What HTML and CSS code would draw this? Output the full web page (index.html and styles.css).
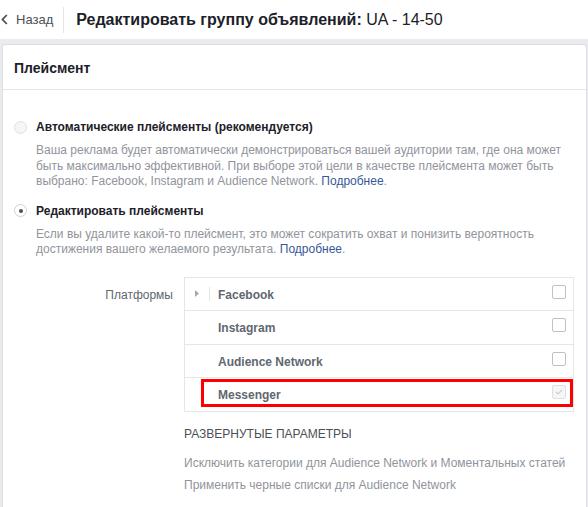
FILE: index.html
```html
<!DOCTYPE html>
<html lang="ru">
<head>
<meta charset="utf-8">
<title>Редактировать группу объявлений</title>
<link rel="stylesheet" href="styles.css">
</head>
<body>
<header class="topbar">
  <a class="back">
    <svg class="back-icon" width="7" height="11" viewBox="0 0 7 11"><path d="M5.8 1 1.5 5.5 5.8 10" fill="none" stroke="#4b4f56" stroke-width="1.8"/></svg>
    <span>Назад</span>
  </a>
  <div class="vsep"></div>
  <h1 class="title"><b>Редактировать группу объявлений:</b> UA - 14-50</h1>
</header>
<section class="card">
  <div class="card-head">Плейсмент</div>
  <div class="card-body">
    <div class="option">
      <span class="radio"></span>
      <span class="option-label">Автоматические плейсменты (рекомендуется)</span>
    </div>
    <p class="desc">Ваша реклама будет автоматически демонстрироваться вашей аудитории там, где она может быть максимально эффективной. При выборе этой цели в качестве плейсмента может быть выбрано: Facebook, Instagram и Audience Network. <a class="link">Подробнее</a>.</p>
    <div class="option">
      <span class="radio checked"></span>
      <span class="option-label">Редактировать плейсменты</span>
    </div>
    <p class="desc">Если вы удалите какой-то плейсмент, это может сократить охват и понизить вероятность достижения вашего желаемого результата. <a class="link">Подробнее</a>.</p>

    <div class="platforms">
      <div class="platforms-label">Платформы</div>
      <div class="platforms-main">
        <div class="ptable">
          <div class="prow">
            <span class="caret"><svg width="4" height="7" viewBox="0 0 4 7"><path d="M0 0 4 3.5 0 7z" fill="#a5a8ae"/></svg></span>
            <span class="caret-sep"></span>
            <span class="pname">Facebook</span>
            <span class="cbox"></span>
          </div>
          <div class="prow">
            <span class="pname">Instagram</span>
            <span class="cbox"></span>
          </div>
          <div class="prow">
            <span class="pname">Audience Network</span>
            <span class="cbox"></span>
          </div>
          <div class="prow">
            <span class="pname">Messenger</span>
            <span class="cbox disabled"><svg width="8" height="6" viewBox="0 0 8 6"><path d="M1 3 3 5 7 1" fill="none" stroke="#ccd0d5" stroke-width="1.2"/></svg></span>
            <span class="highlight"></span>
          </div>
        </div>
        <div class="adv-title">РАЗВЕРНУТЫЕ ПАРАМЕТРЫ</div>
        <div class="adv-link">Исключить категории для Audience Network и Моментальных статей</div>
        <div class="adv-link">Применить черные списки для Audience Network</div>
      </div>
    </div>
  </div>
</section>
</body>
</html>
```
FILE: styles.css
```css
* { box-sizing: border-box; }
html, body { margin: 0; padding: 0; }
body {
  background: #e9ebee;
  font-family: "Liberation Sans", Arial, sans-serif;
  font-size: 12px;
  color: #1d2129;
  height: 507px;
  overflow: hidden;
}
.topbar {
  height: 39px;
  background: #fff;
  display: flex;
  align-items: center;
}
.back {
  display: flex;
  align-items: center;
  color: #4b4f56;
  font-size: 13px;
  padding-left: 1px;
}
.back-icon { margin-right: 8px; }
.vsep {
  width: 1px;
  height: 26px;
  background: #e5e6e9;
  margin: 0 12px 0 10px;
}
.title {
  margin: 0;
  font-size: 16px;
  font-weight: normal;
  color: #1d2129;
  line-height: 20px;
  padding-top: 1px;
}
.title b { font-weight: bold; }
.card {
  margin: 5px 1px 0 2px;
  background: #fff;
  border: 1px solid #dddfe2;
  border-bottom: 0;
  border-radius: 3px 3px 0 0;
  height: 470px;
}
.card-head {
  font-size: 14px;
  font-weight: bold;
  line-height: 17px;
  padding: 15px 11px 12px;
  border-bottom: 1px solid #e5e6e9;
}
.card-body {
  padding: 29px 11px 0 10px;
}
.option {
  display: flex;
  align-items: center;
  height: 16px;
  gap: 9px;
}
.radio {
  width: 13px;
  height: 13px;
  margin-left: 1px;
  border-radius: 50%;
  border: 1px solid #dddfe2;
  background: #f5f6f7;
  position: relative;
}
.radio.checked {
  background: #fff;
  border-color: #ccd0d5;
}
.radio.checked::after {
  content: "";
  position: absolute;
  left: 3.5px;
  top: 3.5px;
  width: 4px;
  height: 4px;
  border-radius: 50%;
  background: #4b4f56;
}
.option-label {
  font-weight: bold;
  line-height: 16px;
}
.desc {
  margin: 8px 0 13px 23px;
  color: #90949c;
  line-height: 15.5px;
}
.link { color: #365899; }
.platforms {
  display: flex;
  gap: 11px;
  margin-top: 19px;
}
.platforms-label {
  width: 160px;
  text-align: right;
  color: #606770;
  line-height: 16px;
  margin-top: 10px;
}
.platforms-main { width: 390px; }
.ptable {
  border: 1px solid #e5e6e9;
  border-bottom: 0;
}
.prow {
  position: relative;
  display: flex;
  align-items: flex-start;
  height: 33.5px;
  border-bottom: 1px solid #e5e6e9;
  padding: 0 7px 0 33px;
}
.prow:first-child { padding-left: 10px; }
.caret {
  display: flex;
  margin-top: 12px;
  width: 4px;
  height: 7px;
}
.caret-sep {
  width: 1px;
  height: 14px;
  background: #e5e6e9;
  margin: 9px 8px 0 10px;
}
.pname {
  flex: 1;
  font-weight: bold;
  color: #606770;
  line-height: 16px;
  margin-top: 9px;
}
.cbox {
  width: 14px;
  height: 14px;
  border: 1px solid #bec2c9;
  border-radius: 2px;
  margin-top: 7px;
  background: #fff;
}
.cbox.disabled {
  background: #f5f6f7;
  border-color: #dddfe2;
  display: flex;
  align-items: center;
  justify-content: center;
}
.highlight {
  position: absolute;
  left: 16px;
  right: 0;
  top: 1px;
  height: 28px;
  border: 3px solid #f00;
}
.adv-title {
  margin-top: 14px;
  color: #4b4f56;
  line-height: 16px;
}
.adv-link {
  color: #90949c;
  line-height: 16px;
  margin-top: 6px;
}
.adv-title + .adv-link { margin-top: 13px; }
```
